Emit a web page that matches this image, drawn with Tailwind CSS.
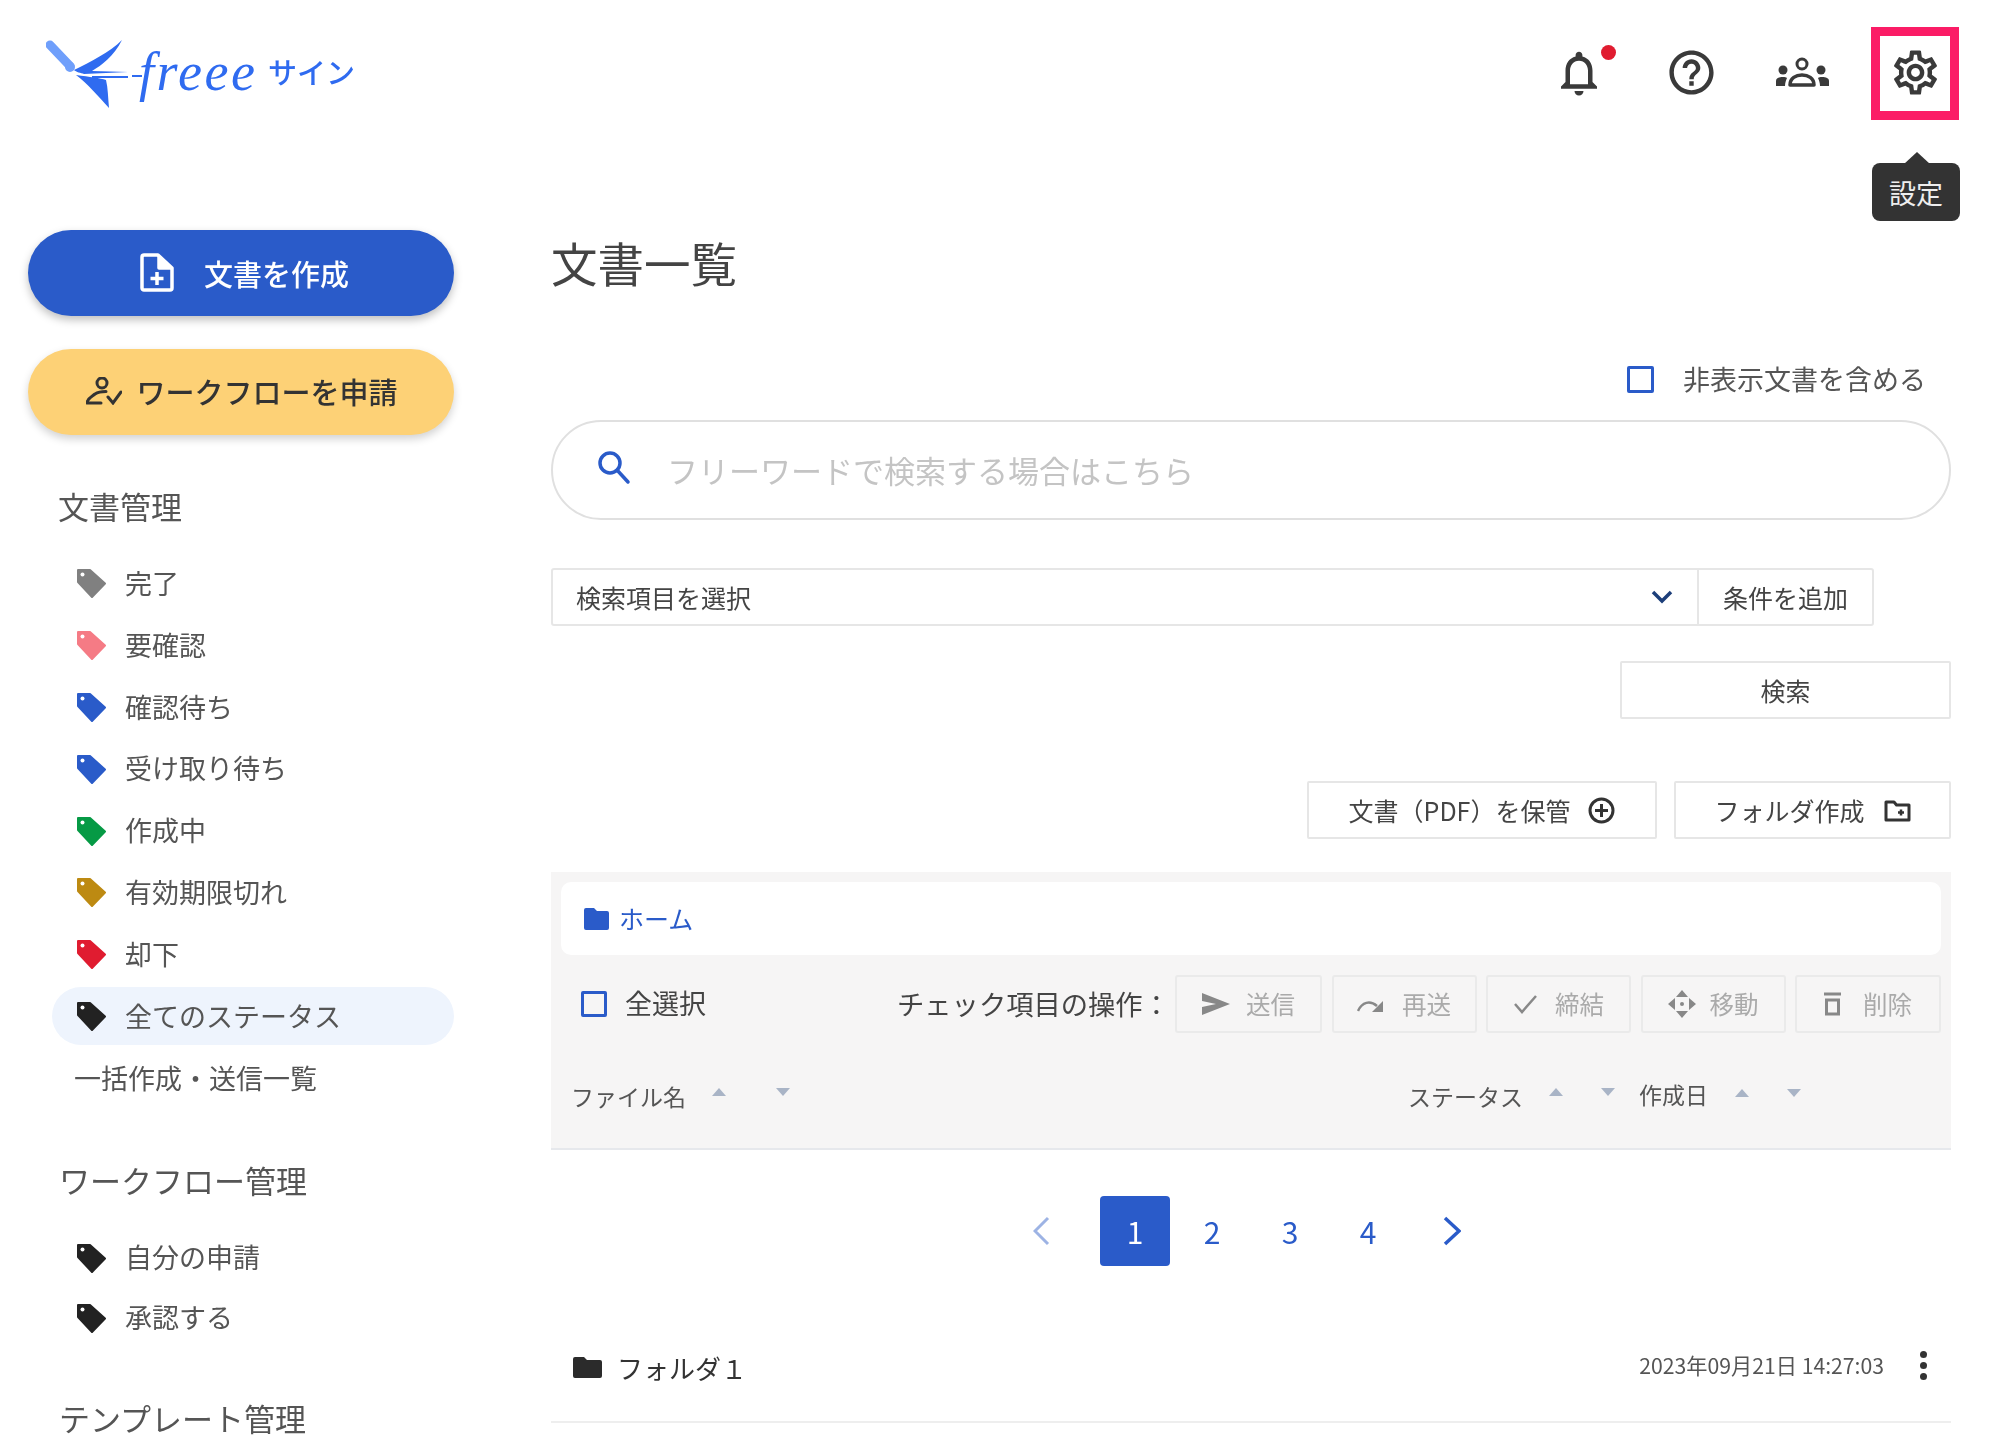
<!DOCTYPE html>
<html lang="ja">
<head>
    <meta charset="UTF-8">
    <title>文書一覧 - freee サイン</title>
    <script src="https://cdn.jsdelivr.net/npm/@tailwindcss/browser@4"></script>
</head>
<body class="bg-white text-[#444] font-['Noto_Sans_CJK_JP','Noto_Sans',sans-serif]">
    <svg class="hidden">
        <symbol id="tag" viewBox="0 0 30 30">
            <path fill="currentColor" stroke="currentColor" stroke-width="2" stroke-linejoin="round" d="M2 2h12l15 13.500L16 29 2 14z"/>
            <circle cx="6.500" cy="6.500" r="2" fill="#fff"/>
        </symbol>
        <symbol id="up" viewBox="0 0 14 8"><path fill="#a9b4c6" d="M7 0l7 8H0z"/></symbol>
        <symbol id="down" viewBox="0 0 14 8"><path fill="#a9b4c6" d="M0 0h14L7 8z"/></symbol>
    </svg>

    <div class="w-[1999px] h-[1449px] overflow-hidden flex flex-col blur-[0.5px]">
        <!-- header -->
        <header class="h-[230px] shrink-0 flex justify-between items-start pt-[27px] pr-[40px] pl-[46px]">
            <div class="flex items-center mt-[13px] h-[68px] text-[#2f6bf0]">
                <svg class="w-[96px] h-[68px] shrink-0" viewBox="0 0 96 68" fill="none">
                    <path d="M4 5L24 26" stroke="#6f9ffb" stroke-width="9" stroke-linecap="round"/>
                    <circle cx="24" cy="27" r="4" stroke="#6f9ffb" stroke-width="2"/>
                    <path fill="#2f6bf0" d="M76 0C68 16 56 25 46 31l36 1-44 2c-3-1-8-2-10-4C44 22 64 12 76 0z"/>
                    <path fill="#2f6bf0" d="M30 35c14 2 24 3 30 5 2 8 2 18 3 28C52 56 42 44 30 35z"/>
                    <path d="M46 37h36M86 36h14" stroke="#2f6bf0" stroke-width="2"/>
                </svg>
                <span class="font-['Liberation_Serif',serif] italic text-[54px] leading-none -ml-[3px] tracking-[2.500px] -mt-[4px] w-[129px]">freee</span>
                <span class="text-[29px] font-medium leading-none -mt-[5px]">サイン</span>
            </div>

            <div class="relative flex items-center">
                <div class="w-[112px] h-[93px] pb-[2px] flex items-center justify-center relative">
                    <svg class="w-[54px] h-[54px]" viewBox="0 0 24 24" fill="#3a3a3a"><path d="M12 22c1.100 0 2-.9 2-2h-4c0 1.100.9 2 2 2zm6-6v-5c0-3.070-1.630-5.640-4.500-6.320V4c0-.83-.67-1.500-1.500-1.500s-1.500.67-1.500 1.500v.68C7.640 5.360 6 7.920 6 11v5l-2 2v1h16v-1l-2-2zm-2 1H8v-6c0-2.480 1.510-4.500 4-4.500s4 2.020 4 4.500v6z"/></svg>
                    <span class="absolute left-[78px] top-[18px] w-[15px] h-[15px] rounded-full bg-[#e01c30]"></span>
                </div>
                <div class="w-[112px] h-[93px] pb-[2px] flex items-center justify-center">
                    <svg class="w-[53px] h-[53px]" viewBox="0 0 24 24" fill="#3a3a3a"><path d="M11 18h2v-2h-2v2zm1-16C6.480 2 2 6.480 2 12s4.480 10 10 10 10-4.480 10-10S17.520 2 12 2zm0 18c-4.410 0-8-3.590-8-8s3.590-8 8-8 8 3.590 8 8-3.590 8-8 8zm0-14c-2.210 0-4 1.790-4 4h2c0-1.100.9-2 2-2s2 .9 2 2c0 2-3 1.750-3 5h2c0-2.250 3-2.500 3-5 0-2.210-1.790-4-4-4z"/></svg>
                </div>
                <div class="w-[112px] h-[93px] pb-[3px] flex items-center justify-center">
                    <svg class="w-[54px] h-[30px]" viewBox="0 0 54 30" fill="#3a3a3a">
                        <circle cx="26" cy="7" r="5" fill="none" stroke="#3a3a3a" stroke-width="3"/>
                        <path d="M14 28c0-7 6-10 12-10s12 3 12 10z" fill="none" stroke="#3a3a3a" stroke-width="3.500" stroke-linejoin="round"/>
                        <circle cx="7" cy="13" r="4.500"/><circle cx="45" cy="13" r="4.500"/>
                        <path d="M0 29v-5c0-3 3-4 7-4 2 0 3 .4 4 1-1 2-2 5-2 8zM53 29v-5c0-3-3-4-7-4-2 0-3 .4-4 1 1 2 2 5 2 8z"/>
                    </svg>
                </div>
                <div class="ml-[12px] w-[88px] h-[93px] pb-[2px] border-[9px] border-[#fb1c66] flex items-center justify-center">
                    <svg class="w-[53px] h-[53px] shrink-0" viewBox="0 0 24 24" fill="#3a3a3a"><path d="M19.430 12.980c.04-.32.07-.64.07-.98 0-.34-.03-.66-.07-.98l2.110-1.650c.19-.15.24-.42.12-.64l-2-3.460c-.09-.16-.26-.25-.44-.25-.06 0-.12.01-.17.03l-2.490 1c-.52-.4-1.080-.73-1.690-.98l-.38-2.650C14.460 2.180 14.250 2 14 2h-4c-.25 0-.46.18-.49.42l-.38 2.650c-.61.25-1.170.59-1.690.98l-2.490-1c-.06-.02-.12-.03-.18-.03-.17 0-.34.09-.43.25l-2 3.460c-.13.22-.07.49.12.64l2.110 1.650c-.04.32-.07.65-.07.98 0 .33.03.66.07.98l-2.110 1.650c-.19.15-.24.42-.12.64l2 3.460c.09.16.26.25.44.25.06 0 .12-.01.17-.03l2.490-1c.52.4 1.080.73 1.690.98l.38 2.650c.03.24.24.42.49.42h4c.25 0 .46-.18.49-.42l.38-2.650c.61-.25 1.170-.59 1.690-.98l2.490 1c.06.02.12.03.18.03.17 0 .34-.09.43-.25l2-3.460c.12-.22.07-.49-.12-.64l-2.110-1.650zm-1.980-1.710c.04.31.05.52.05.73 0 .21-.02.43-.05.73l-.14 1.130.89.7 1.080.84-.7 1.210-1.270-.51-1.040-.42-.9.68c-.43.32-.84.56-1.250.73l-1.060.43-.16 1.130-.2 1.350h-1.400l-.19-1.350-.16-1.130-1.060-.43c-.43-.18-.83-.41-1.230-.71l-.91-.7-1.060.43-1.270.51-.7-1.210 1.080-.84.89-.7-.14-1.130c-.03-.31-.05-.54-.05-.74s.02-.43.05-.73l.14-1.130-.89-.7-1.080-.84.7-1.210 1.270.51 1.040.42.9-.68c.43-.32.84-.56 1.250-.73l1.060-.43.16-1.130.2-1.350h1.390l.19 1.350.16 1.130 1.060.43c.43.18.83.41 1.230.71l.91.7 1.060-.43 1.270-.51.7 1.210-1.070.85-.89.7.14 1.130zM12 8c-2.210 0-4 1.790-4 4s1.790 4 4 4 4-1.790 4-4-1.790-4-4-4zm0 6c-1.100 0-2-.9-2-2s.9-2 2-2 2 .9 2 2-.9 2-2 2z"/></svg>
                </div>
                <!-- tooltip -->
                <div class="absolute right-[-1px] top-[136px] w-[88px] h-[58px] rounded-[8px] bg-[#333] text-[#eee] text-[27px] leading-none flex items-center justify-center">
                    設定
                    <span class="absolute left-[32px] -top-[11px] w-0 h-0 border-x-[13px] border-x-transparent border-b-[12px] border-b-[#333]"></span>
                </div>
            </div>
        </header>

        <div class="flex flex-1 min-h-0">
            <!-- sidebar -->
            <aside class="w-[551px] shrink-0 pl-[28px]">
                <button class="w-[426px] h-[86px] rounded-full bg-[#2a5bc9] text-white text-[29px] font-medium flex items-center justify-center gap-[30px] pl-[7px] pr-0 shadow-[0_4px_8px_rgba(0,0,0,0.25)]">
                    <svg class="w-[34px] h-[39px] -mt-[2px]" viewBox="0 0 34 39" fill="none" stroke="#fff" stroke-width="3.500" stroke-linejoin="round">
                        <path d="M4 2h14l14 13v20a2 2 0 0 1-2 2H4a2 2 0 0 1-2-2V4a2 2 0 0 1 2-2z"/>
                        <path d="M19 3v12h12" fill="#fff"/>
                        <path d="M17 19v13M10.500 25.500h13"/>
                    </svg>
                    <span class="pt-[2px]">文書を作成</span>
                </button>
                <button class="mt-[33px] w-[426px] h-[86px] rounded-full bg-[#fdd176] text-[#333] text-[29px] font-medium flex items-center justify-center gap-[14px] pl-[2px] shadow-[0_4px_8px_rgba(0,0,0,0.18)]">
                    <svg class="w-[36px] h-[28px] -mt-[2px]" viewBox="0 0 36 28" fill="none" stroke="#333" stroke-width="3" stroke-linecap="round">
                        <circle cx="16" cy="6" r="5"/>
                        <path d="M1 26c0-4 4-6 8-9 3-2 7-2.500 11-2.500M1 26h14"/>
                        <path d="M22 20l5 6 8-11"/>
                    </svg>
                    ワークフローを申請
                </button>

                <h2 class="mt-[51px] ml-[30px] text-[31px] leading-[40px] text-[#555]">文書管理</h2>
                <nav class="mt-[28px] ml-[24px] w-[402px] flex flex-col gap-[3.900px] text-[27px] text-[#555]">
                    <a class="h-[58px] pl-[24px] flex items-center gap-[19px]"><svg class="w-[30px] h-[30px] text-[#808080]"><use href="#tag"/></svg>完了</a>
                    <a class="h-[58px] pl-[24px] flex items-center gap-[19px]"><svg class="w-[30px] h-[30px] text-[#f57b85]"><use href="#tag"/></svg>要確認</a>
                    <a class="h-[58px] pl-[24px] flex items-center gap-[19px]"><svg class="w-[30px] h-[30px] text-[#2a5bc9]"><use href="#tag"/></svg>確認待ち</a>
                    <a class="h-[58px] pl-[24px] flex items-center gap-[19px]"><svg class="w-[30px] h-[30px] text-[#2a5bc9]"><use href="#tag"/></svg>受け取り待ち</a>
                    <a class="h-[58px] pl-[24px] flex items-center gap-[19px]"><svg class="w-[30px] h-[30px] text-[#069a45]"><use href="#tag"/></svg>作成中</a>
                    <a class="h-[58px] pl-[24px] flex items-center gap-[19px]"><svg class="w-[30px] h-[30px] text-[#bd8a12]"><use href="#tag"/></svg>有効期限切れ</a>
                    <a class="h-[58px] pl-[24px] flex items-center gap-[19px]"><svg class="w-[30px] h-[30px] text-[#e01c30]"><use href="#tag"/></svg>却下</a>
                    <a class="h-[58px] pl-[24px] flex items-center gap-[19px] rounded-full bg-[#eef4fd]"><svg class="w-[30px] h-[30px] text-[#222]"><use href="#tag"/></svg>全てのステータス</a>
                    <a class="h-[58px] pl-[22px] flex items-center">一括作成・送信一覧</a>
                </nav>

                <h2 class="mt-[52.500px] ml-[31px] text-[31px] leading-[40px] text-[#555]">ワークフロー管理</h2>
                <nav class="mt-[29px] ml-[24px] w-[402px] flex flex-col gap-[2px] text-[27px] text-[#555]">
                    <a class="h-[58px] pl-[24px] flex items-center gap-[19px]"><svg class="w-[30px] h-[30px] text-[#222]"><use href="#tag"/></svg>自分の申請</a>
                    <a class="h-[58px] pl-[24px] flex items-center gap-[19px]"><svg class="w-[30px] h-[30px] text-[#222]"><use href="#tag"/></svg>承認する</a>
                </nav>

                <h2 class="mt-[51px] ml-[31px] text-[31px] leading-[40px] text-[#555]">テンプレート管理</h2>
            </aside>

            <!-- main -->
            <main class="w-[1400px] shrink-0 flex flex-col">
                <h1 class="pt-[2px] text-[46.500px] leading-[60px] text-[#444]">文書一覧</h1>

                <label class="mt-[73px] h-[30px] pr-[25px] flex items-center justify-end gap-[29px] text-[27px] text-[#555] -translate-y-[1px]">
                    <span class="w-[27px] h-[27px] rounded-[2px] border-[3px] border-[#2a5bc9]"></span>
                    非表示文書を含める
                </label>

                <div class="mt-[25px] h-[100px] shrink-0 rounded-full border-2 border-[#e0e0e0] pl-[42px] flex items-center gap-[36px] text-[31px] text-[#c4c4c4]">
                    <svg class="w-[36px] h-[36px] shrink-0 -mt-[6px]" viewBox="0 0 36 36" fill="none" stroke="#2a5bc9" stroke-width="3.500"><circle cx="15" cy="14" r="10"/><path d="M22 21l11 12" stroke-linecap="round"/></svg>
                    フリーワードで検索する場合はこちら
                </div>

                <div class="mt-[48px] w-[1323px] h-[58px] shrink-0 border-2 border-[#e6e6e6] rounded-[3px] flex items-center text-[25px] text-[#444]">
                    <span class="flex-1 pl-[23px] pt-[2px]">検索項目を選択</span>
                    <svg class="w-[22px] h-[14px] mr-[24px]" viewBox="0 0 22 14" fill="none" stroke="#1d3f7a" stroke-width="3.500"><path d="M2 2l9 9 9-9"/></svg>
                    <span class="w-[175px] h-full border-l-2 border-[#e6e6e6] flex items-center justify-center pt-[1px]">条件を追加</span>
                </div>

                <button class="mt-[35px] self-end w-[331px] h-[58px] shrink-0 border-2 border-[#e6e6e6] rounded-[2px] text-[25px] text-[#444] pt-[1px]">検索</button>

                <div class="mt-[62px] flex justify-end gap-[17px] text-[25px] text-[#444]">
                    <button class="w-[350px] h-[58px] border-2 border-[#e6e6e6] rounded-[2px] flex items-center justify-center gap-[18px]">
                        <span class="pt-[2px]">文書（PDF）を保管</span>
                        <svg class="w-[27px] h-[27px]" viewBox="0 0 27 27" fill="none" stroke="#333" stroke-width="3"><circle cx="13.500" cy="13.500" r="11.500"/><path d="M13.500 7v13M7 13.500h13"/></svg>
                    </button>
                    <button class="w-[277px] h-[58px] border-2 border-[#e6e6e6] rounded-[2px] flex items-center justify-center gap-[19px]">
                        <span class="pt-[2px]">フォルダ作成</span>
                        <svg class="w-[27px] h-[23px]" viewBox="0 0 27 23" fill="none" stroke="#333" stroke-width="3" stroke-linejoin="round"><path d="M2 3h8l2.500 3H25v15H2z"/><path d="M14 13.500h6M17 10.500v6" stroke-width="2.500"/></svg>
                    </button>
                </div>

                <section class="mt-[33px] h-[278px] shrink-0 bg-[#f6f5f5] border-b-2 border-[#e6e8ec] p-[10px] flex flex-col">
                    <div class="h-[73px] shrink-0 rounded-[10px] bg-white pl-[23px] flex items-center gap-[10px] text-[25px] text-[#2a5bc9]">
                        <svg class="w-[25px] h-[22px]" viewBox="0 0 25 22" fill="#2a5bc9"><path d="M2 0h8l3 3h10a2 2 0 0 1 2 2v15a2 2 0 0 1-2 2H2a2 2 0 0 1-2-2V2a2 2 0 0 1 2-2z"/></svg>
                        ホーム
                    </div>

                    <div class="mt-[20px] h-[58px] shrink-0 flex items-center">
                        <span class="ml-[20px] w-[26px] h-[26px] rounded-[2px] border-[3px] border-[#2a5bc9] shrink-0"></span>
                        <span class="ml-[18px] w-[81px] shrink-0 text-[27px] text-[#444] whitespace-nowrap -mt-[1px]">全選択</span>
                        <span class="ml-[191px] w-[270px] shrink-0 text-[27.300px] text-[#444] whitespace-nowrap -mt-[1px]">チェック項目の操作：</span>
                        <div class="ml-[8px] flex gap-[9.500px] text-[24.500px] text-[#aaa]">
                            <button class="w-[147px] h-[58px] border-2 border-[#eaeaea] rounded-[3px] flex items-center justify-center gap-[16px]">
                                <svg class="w-[28px] h-[22px]" viewBox="0 0 28 22" fill="#888"><path d="M0 0l28 11L0 22v-8l14-3L0 8z"/></svg>送信
                            </button>
                            <button class="w-[145px] h-[58px] border-2 border-[#eaeaea] rounded-[3px] flex items-center justify-center gap-[18px]">
                                <svg class="w-[27px] h-[17px]" viewBox="0 0 27 17" fill="none" stroke="#888" stroke-width="2.500"><path d="M1 15c4-9 12-11 19-5"/><path d="M26 16V5L15 16z" fill="#888" stroke="none"/></svg>再送
                            </button>
                            <button class="w-[145px] h-[58px] border-2 border-[#eaeaea] rounded-[3px] flex items-center justify-center gap-[18px]">
                                <svg class="w-[24px] h-[20px]" viewBox="0 0 24 20" fill="none" stroke="#888" stroke-width="2.500"><path d="M2 10l7 8L23 2"/></svg>締結
                            </button>
                            <button class="w-[145px] h-[58px] border-2 border-[#eaeaea] rounded-[3px] flex items-center justify-center gap-[14px]">
                                <svg class="w-[28px] h-[28px]" viewBox="0 0 28 28" fill="#888"><path d="M14 0l6 7H8zM14 28l-6-7h12zM0 14l7-6v12zM28 14l-7 6V8z"/><circle cx="14" cy="14" r="2"/></svg>移動
                            </button>
                            <button class="w-[146px] h-[58px] border-2 border-[#eaeaea] rounded-[3px] flex items-center justify-center gap-[22px]">
                                <svg class="w-[17px] h-[24px]" viewBox="0 0 17 24" fill="none" stroke="#888" stroke-width="3"><path d="M0 2h17"/><path d="M2.500 8h12v14h-12z"/></svg>削除
                            </button>
                        </div>
                    </div>

                    <div class="mt-[48px] flex items-start text-[23px] leading-[30px] text-[#555]">
                        <div class="ml-[10px] w-[837px] flex items-center shrink-0">
                            <span>ファイル名</span>
                            <svg class="ml-[26px] -mt-[8px] w-[14px] h-[8px]"><use href="#up"/></svg>
                            <svg class="ml-[50px] -mt-[8px] w-[14px] h-[8px]"><use href="#down"/></svg>
                        </div>
                        <div class="w-[231px] flex items-center shrink-0">
                            <span>ステータス</span>
                            <svg class="ml-[26px] -mt-[8px] w-[14px] h-[8px]"><use href="#up"/></svg>
                            <svg class="ml-[38px] -mt-[8px] w-[14px] h-[8px]"><use href="#down"/></svg>
                        </div>
                        <div class="flex items-center -mt-[2px]">
                            <span>作成日</span>
                            <svg class="ml-[27px] -mt-[2px] w-[14px] h-[8px]"><use href="#up"/></svg>
                            <svg class="ml-[38px] -mt-[2px] w-[14px] h-[8px]"><use href="#down"/></svg>
                        </div>
                    </div>
                </section>

                <div class="mt-[46px] h-[70px] shrink-0 ml-[482px] flex items-center text-[30px] text-[#2a5bc9]">
                    <svg class="w-[17px] h-[30px]" viewBox="0 0 17 30" fill="none" stroke="#9db3e4" stroke-width="3"><path d="M15 2L2 15l13 13"/></svg>
                    <span class="ml-[50px] w-[70px] h-[70px] rounded-[4px] bg-[#2a5bc9] text-white flex items-center justify-center">1</span>
                    <span class="ml-[3px] w-[78px] text-center">2</span>
                    <span class="w-[78px] text-center">3</span>
                    <span class="w-[78px] text-center">4</span>
                    <svg class="ml-[36px] w-[18px] h-[30px]" viewBox="0 0 18 30" fill="none" stroke="#2a5bc9" stroke-width="3.500"><path d="M2 2l14 13L2 28"/></svg>
                </div>

                <div class="mt-[62px] h-[95px] shrink-0 pb-[15px] pl-[22px] pr-[24px] border-b-2 border-[#eee] flex items-center">
                    <svg class="w-[29px] h-[21px] shrink-0" viewBox="0 0 29 21" fill="#2b2b2b"><path d="M2 0h9l3 3h13a2 2 0 0 1 2 2v14a2 2 0 0 1-2 2H2a2 2 0 0 1-2-2V2a2 2 0 0 1 2-2z"/></svg>
                    <span class="ml-[15px] text-[26px] text-[#333]">フォルダ１</span>
                    <span class="ml-auto text-[21.200px] text-[#555] -mt-[4px]">2023年09月21日 14:27:03</span>
                    <div class="ml-[36px] w-[7px] flex flex-col gap-[4px] -mt-[4px]">
                        <span class="w-[7px] h-[7px] rounded-full bg-[#333]"></span>
                        <span class="w-[7px] h-[7px] rounded-full bg-[#333]"></span>
                        <span class="w-[7px] h-[7px] rounded-full bg-[#333]"></span>
                    </div>
                </div>
            </main>
        </div>
    </div>
</body>
</html>
